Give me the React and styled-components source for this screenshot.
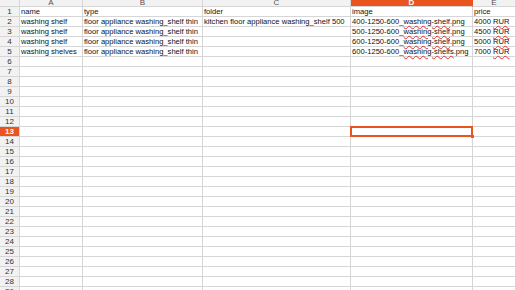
import React from "react";
import styled, { createGlobalStyle, css } from "styled-components";

const Global = createGlobalStyle`
  html, body { margin: 0; padding: 0; background: #fff; overflow: hidden; }
  body { font-family: "Liberation Sans", Arial, sans-serif; }
`;

const ORANGE = "#e9541f";
const LINE = "#d6d6d6";

const Sheet = styled.div`
  display: grid;
  grid-template-columns: 20px 63px 120px 148px 122px 1fr;
  grid-template-rows: 7px repeat(29, 10px);
  width: 516px;
  height: 290px;
  overflow: hidden;
  font-size: 7.6px;
`;

const ColHead = styled.div`
  box-sizing: border-box;
  border-right: 1px solid ${p => (p.$sel ? ORANGE : LINE)};
  border-bottom: 1px solid ${LINE};
  background: ${p => (p.$sel ? ORANGE : "#f2f2f2")};
  color: ${p => (p.$sel ? "#fff" : "#555")};
  font-weight: ${p => (p.$sel ? "bold" : "normal")};
  text-align: center;
  line-height: 7px;
  overflow: hidden;
  font-size: 8px;
  span { position: relative; top: -1px; display: inline-block; }
`;

const RowHead = styled.div`
  box-sizing: border-box;
  border-right: 1px solid ${LINE};
  border-bottom: 1px solid ${LINE};
  background: ${p => (p.$sel ? ORANGE : "#f2f2f2")};
  color: ${p => (p.$sel ? "#fff" : "#333")};
  font-weight: ${p => (p.$sel ? "bold" : "normal")};
  text-align: center;
  line-height: 9px;
  font-size: 8px;
`;

const Cell = styled.div`
  position: relative;
  box-sizing: border-box;
  border-right: 1px solid ${LINE};
  border-bottom: 1px solid ${LINE};
  color: #111;
  line-height: 9px;
  padding-left: 1px;
  white-space: nowrap;
  overflow: visible;
  ${p =>
    p.$sel &&
    css`
      &::before {
        content: "";
        position: absolute;
        left: -1px;
        top: -1px;
        right: -1px;
        bottom: -1px;
        border: 2px solid ${ORANGE};
        z-index: 2;
      }
      &::after {
        content: "";
        position: absolute;
        right: -2px;
        bottom: -2px;
        width: 3px;
        height: 3px;
        background: ${ORANGE};
        z-index: 3;
      }
    `}
`;

const Typo = styled.span`
  text-decoration: underline wavy #e03030;
  text-decoration-thickness: 0.5px;
  text-underline-offset: 0.5px;
`;

const cols = ["A", "B", "C", "D", "E"];

const data = [
  ["name", "type", "folder", "image", "price"],
  [
    "washing shelf",
    "floor appliance washing_shelf thin",
    "kitchen floor appliance washing_shelf 500",
    <>400-1250-600_<Typo>washing-shelf</Typo>.png</>,
    <>4000 <Typo>RUR</Typo></>,
  ],
  [
    "washing shelf",
    "floor appliance washing_shelf thin",
    "",
    <>500-1250-600_<Typo>washing-shelf</Typo>.png</>,
    <>4500 <Typo>RUR</Typo></>,
  ],
  [
    "washing shelf",
    "floor appliance washing_shelf thin",
    "",
    <>600-1250-600_<Typo>washing-shelf</Typo>.png</>,
    <>5000 <Typo>RUR</Typo></>,
  ],
  [
    "washing shelves",
    "floor appliance washing_shelf thin",
    "",
    <>600-1250-600_<Typo>washing-shelfs</Typo>.png</>,
    <>7000 <Typo>RUR</Typo></>,
  ],
];

export default function App() {
  const rows = [];
  for (let r = 1; r <= 29; r++) {
    const vals = data[r - 1] || ["", "", "", "", ""];
    rows.push(
      <RowHead key={`h${r}`} $sel={r === 13}>{r}</RowHead>
    );
    vals.forEach((v, i) => {
      rows.push(
        <Cell key={`c${r}-${i}`} $sel={r === 13 && i === 3}>{v}</Cell>
      );
    });
  }
  return (
    <>
      <Global />
      <Sheet>
        <ColHead />
        {cols.map(c => (
          <ColHead key={c} $sel={c === "D"}><span>{c}</span></ColHead>
        ))}
        {rows}
      </Sheet>
    </>
  );
}
